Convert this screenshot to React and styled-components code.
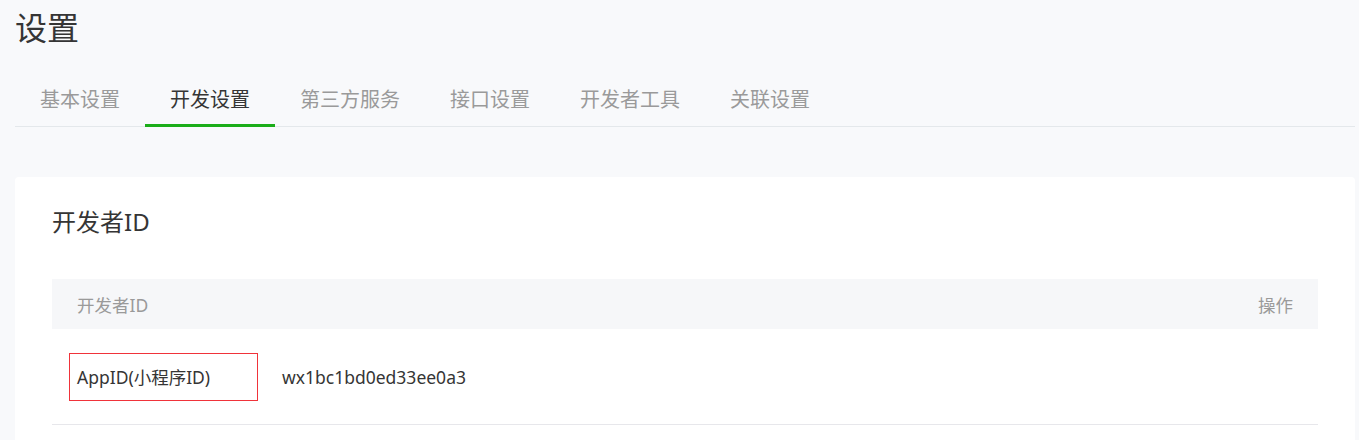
import React from 'react';
import styled, { createGlobalStyle } from 'styled-components';

const GlobalStyle = createGlobalStyle`
  body {
    margin: 0;
    background-color: #f8f9fb;
    font-family: "Noto Sans", "Noto Sans CJK SC", sans-serif;
    color: #353535;
  }
`

const Page = styled.div`
  padding: 0 4px 0 15px;
`

const Title = styled.h1`
  margin: 8px 0 0 0;
  font-size: 32px;
  line-height: 40px;
  font-weight: normal;
  color: #353535;
`

const Tabs = styled.div`
  display: flex;
  margin-top: 27px;
  border-bottom: 1px solid #e4e8eb;
`

const Tab = styled.div`
  padding: 0 25px;
  height: 49px;
  line-height: 49px;
  font-size: 20px;
  color: ${p => (p.active ? '#353535' : '#9a9a9a')};
  border-bottom: 3px solid ${p => (p.active ? '#1aad19' : 'transparent')};
  margin-bottom: -1px;
  cursor: pointer;
`

const Card = styled.div`
  margin-top: 50px;
  background-color: #fff;
  border-radius: 4px;
  padding: 28px 37px 40px 37px;
`

const CardTitle = styled.h2`
  margin: 0 0 40px 0;
  font-size: 24px;
  line-height: 34px;
  font-weight: normal;
  color: #353535;
`

const TableHead = styled.div`
  display: flex;
  justify-content: space-between;
  align-items: center;
  height: 50px;
  padding: 0 25px;
  background-color: #f6f7f9;
  font-size: 17.5px;
  color: #9a9a9a;
`

const TableRow = styled.div`
  display: flex;
  align-items: center;
  height: 95px;
  border-bottom: 1px solid #e7e7eb;
  font-size: 17.5px;
  color: #353535;
`

const LabelCell = styled.div`
  width: 230px;
  padding-left: 17px;
  box-sizing: border-box;
`

const Marked = styled.div`
  display: flex;
  align-items: center;
  width: 189px;
  height: 48px;
  box-sizing: border-box;
  padding-left: 7px;
  border: 1px solid #f0333a;
`

const ValueCell = styled.div`
  flex: 1;
`

const tabs = ['基本设置', '开发设置', '第三方服务', '接口设置', '开发者工具', '关联设置'];

const App = () => (
  <Page>
    <GlobalStyle />
    <Title>设置</Title>
    <Tabs>
      {tabs.map(t => (
        <Tab key={t} active={t === '开发设置'}>{t}</Tab>
      ))}
    </Tabs>
    <Card>
      <CardTitle>开发者ID</CardTitle>
      <TableHead>
        <span>开发者ID</span>
        <span>操作</span>
      </TableHead>
      <TableRow>
        <LabelCell>
          <Marked>AppID(小程序ID)</Marked>
        </LabelCell>
        <ValueCell>wx1bc1bd0ed33ee0a3</ValueCell>
      </TableRow>
    </Card>
  </Page>
)

export default App;
